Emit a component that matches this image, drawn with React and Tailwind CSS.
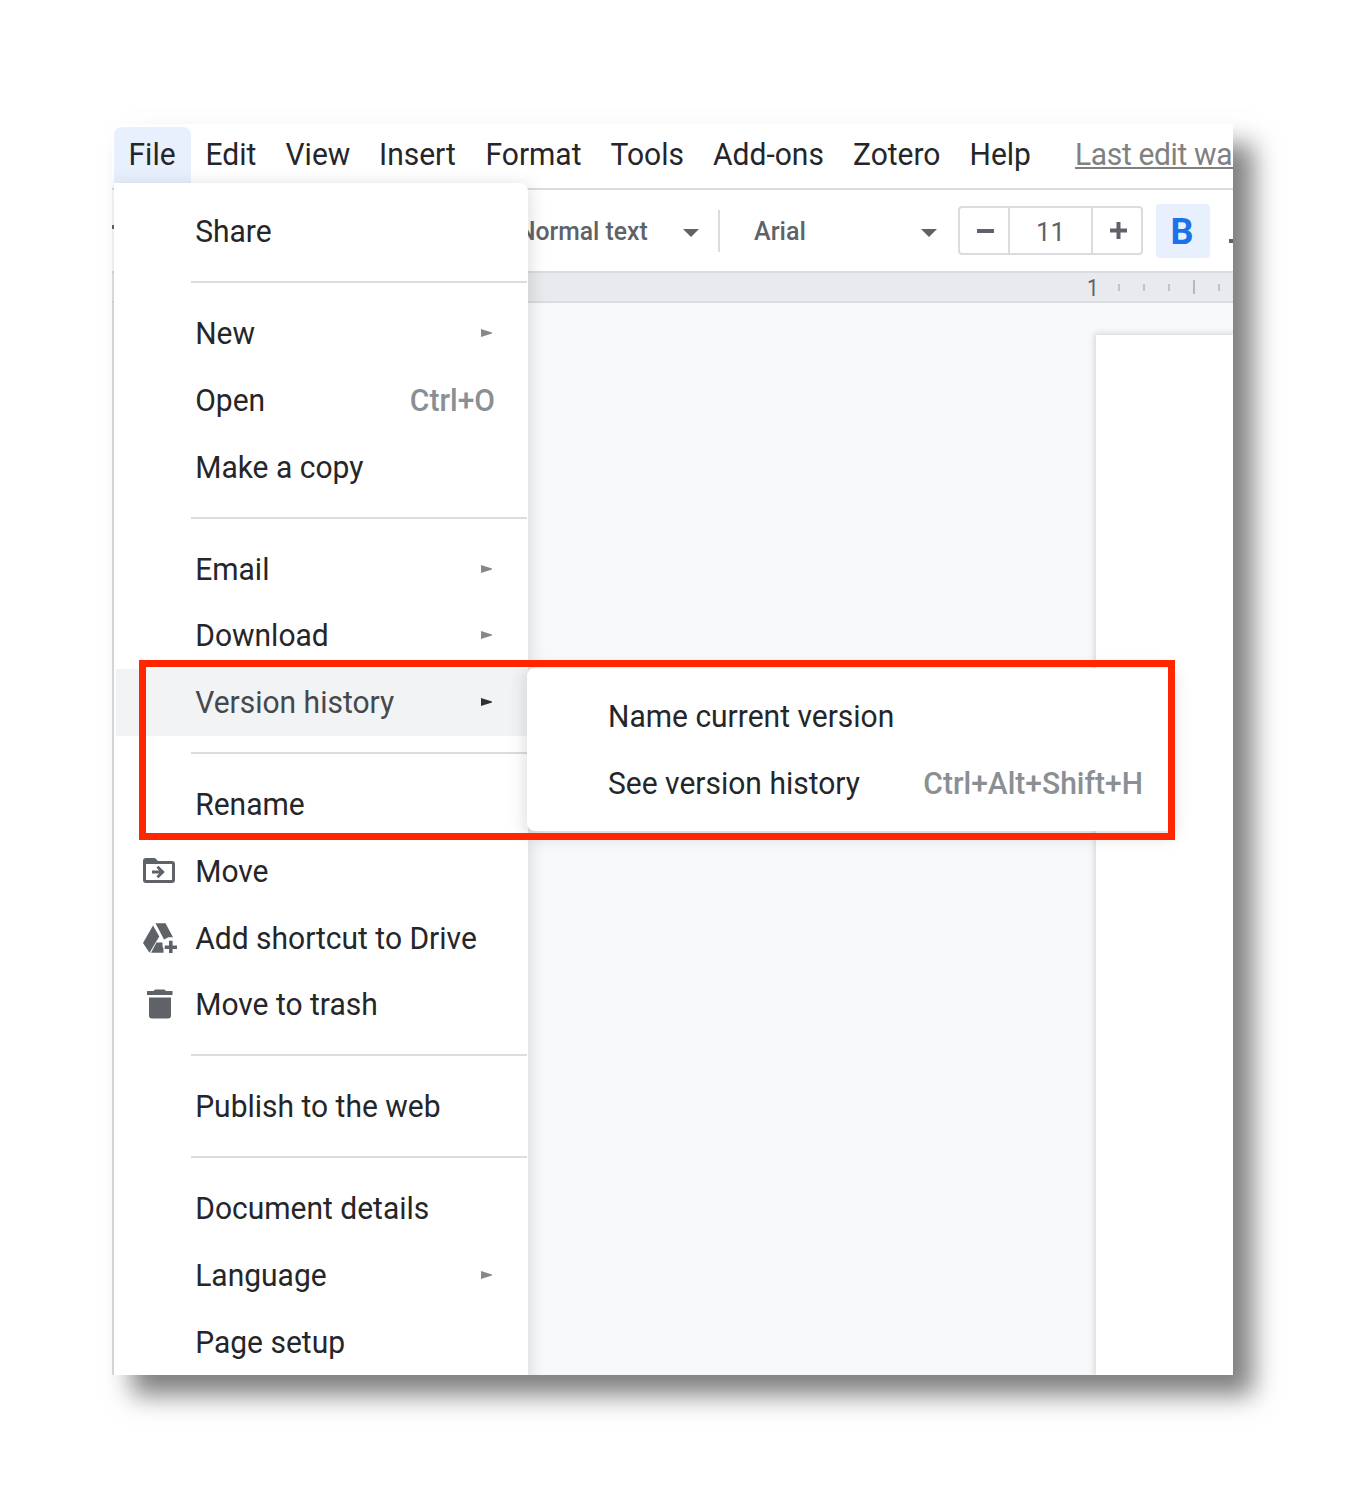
const menuBar = [
  { label: 'File', cls: 'w-[77px] pl-[14.5px] bg-[#e8f0fe] rounded-t-lg' },
  { label: 'Edit', cls: 'w-[80px] pl-[14.5px]' },
  { label: 'View', cls: 'w-[94px] pl-[14.5px]' },
  { label: 'Insert', cls: 'w-[106px] pl-[14px]' },
  { label: 'Format', cls: 'w-[125px] pl-[14.5px]' },
  { label: 'Tools', cls: 'w-[103px] pl-[14.5px]' },
  { label: 'Add-ons', cls: 'w-[139px] pl-[14px]' },
  { label: 'Zotero', cls: 'w-[117px] pl-[15px]' },
  { label: 'Help', cls: 'w-[120px] pl-[14.5px]' },
];

const fileMenu = [
  { label: 'Share' },
  null,
  { label: 'New', sub: true },
  { label: 'Open', keys: 'Ctrl+O' },
  { label: 'Make a copy' },
  null,
  { label: 'Email', sub: true },
  { label: 'Download', sub: true },
  { label: 'Version history', sub: true, active: true },
  null,
  { label: 'Rename' },
  { label: 'Move', icon: 'move' },
  { label: 'Add shortcut to Drive', icon: 'drive' },
  { label: 'Move to trash', icon: 'trash' },
  null,
  { label: 'Publish to the web' },
  null,
  { label: 'Document details' },
  { label: 'Language', sub: true },
  { label: 'Page setup' },
];

function Tall({ children, className = '' }) {
  return <span className={`inline-block origin-[0_84%] translate-y-[0.6px] scale-y-[1.07] ${className}`}>{children}</span>;
}

function Icon({ name }) {
  if (name === 'move')
    return (
      <svg className="h-[26px] w-8" viewBox="0 0 32 26" fill="none">
        <path fill="#5f6368" fillRule="evenodd" d="M3 0h9l3 3h14a3 3 0 0 1 3 3v16a3 3 0 0 1-3 3H3a3 3 0 0 1-3-3V3a3 3 0 0 1 3-3Zm0 6v16h26V6H3Z" />
        <path fill="#5f6368" d="M9 12.500h7.200l-2.800-2.700 2.100-2.100 6.300 6.300-6.300 6.300-2.100-2.100 2.800-2.700H9Z" />
      </svg>
    );
  if (name === 'drive')
    return (
      <svg className="h-[30px] w-[34px]" viewBox="0 0 34 30" fill="#5f6368">
        <path d="M10 2.500 16.300 13.500 6.500 29.700 0 20Z" />
        <path d="M12.500.3h10L30 14.200h-4.500l-4.500 2.300Z" />
        <path d="M13.500 19.500h6V23l1 2.800v3.900H8Z" />
        <path d="M26 17.800h3.600v4.700H34v3.600h-4.400v4H26v-4h-4.300v-3.600H26Z" />
      </svg>
    );
  return (
    <svg className="ml-1 h-[30px] w-[26px]" viewBox="0 0 26 30" fill="#5f6368">
      <path d="M0 2h6.500L8 .4h9.500L19 2h6.500v4H0ZM2 8.500h22V26.500a3 3 0 0 1-3 3H5a3 3 0 0 1-3-3Z" />
    </svg>
  );
}

function Row({ item }) {
  return (
    <div className={`ml-0.5 flex h-[66.8px] shrink-0 items-center ${item.active ? 'bg-[#f1f3f4]' : ''}`}>
      <div className="flex w-[79.2px] shrink-0 items-center pl-[27px]">{item.icon && <Icon name={item.icon} />}</div>
      <Tall className={item.active ? 'grow text-[#46484b]' : 'grow'}>{item.label}</Tall>
      {item.keys && <Tall className="pr-[33px] font-medium text-[#8a8f94]">{item.keys}</Tall>}
      {item.sub && (
        <svg className="mr-[36.500px] h-2 w-[11px]" viewBox="0 0 11 8" fill={item.active ? '#303134' : '#85888c'}>
          <path d="M0 0 11 3.500v1L0 8Z" />
        </svg>
      )}
    </div>
  );
}

function Caret() {
  return (
    <svg className="mt-1 h-2 w-4 shrink-0" viewBox="0 0 16 8" fill="#5f6368">
      <path d="M0 0h16L8 8Z" />
    </svg>
  );
}

export default function App() {
  return (
    <div className="h-[1500px] w-[1345px] overflow-hidden bg-white pt-[124px] pl-[112px] font-['Roboto',sans-serif] text-[30px] leading-none whitespace-nowrap text-[#25262a]">
      <div className="relative h-[1251px] w-[1121px] shadow-[20px_20px_24px_rgba(0,0,0,0.5)]">
        <div className="flex h-full flex-col overflow-hidden bg-white">
          <div className="flex h-[64px] shrink-0 pt-[3px] pl-0.5">
            {menuBar.map((m) => (
              <div key={m.label} className={`flex h-[58px] shrink-0 items-center pb-1 ${m.cls}`}>
                <Tall>{m.label}</Tall>
              </div>
            ))}
            <div className="mt-3 h-[30px] w-[158px] shrink-0 border-b-2 border-[#80807f] text-[#80807f]">
              <Tall className="tracking-[-0.35px]">Last edit wa</Tall>
            </div>
          </div>
          <div className="flex h-[83px] shrink-0 items-center border-t-2 border-[#dadce0] pl-[406px] text-[26px] font-medium text-[#5f6368]">
            <span className="w-[165px] shrink-0 origin-left scale-x-[0.95]">Normal text</span>
            <Caret />
            <div className="mr-[34px] ml-[19px] h-[42px] w-0.5 shrink-0 bg-[#dadce0]" />
            <span className="w-[167px] shrink-0 origin-left scale-x-[0.965]">Arial</span>
            <Caret />
            <div className="ml-[21px] flex h-[49px] w-[185px] shrink-0 rounded border-2 border-[#dadce0]">
              <div className="flex w-[48px] shrink-0 items-center justify-center pl-0.5"><div className="h-1 w-[17px] bg-[#5f6368]" /></div>
              <div className="flex w-[85px] shrink-0 items-center justify-center border-x-2 border-[#dadce0] pt-[3px] font-normal">11</div>
              <div className="flex w-[48px] shrink-0 items-center justify-center pl-0.5">
                <svg className="h-[17px] w-[17px]" viewBox="0 0 17 17" fill="#5f6368"><path d="M6.500 0h4v6.500H17v4h-6.500V17h-4v-6.500H0v-4h6.500Z" /></svg>
              </div>
            </div>
            <div className="ml-[13px] flex h-[54px] w-[54px] shrink-0 items-center justify-center rounded bg-[#e8f0fe] pt-0.5 pr-0.5 text-[36px] font-bold text-[#1a73e8]">B</div>
            <div className="mt-5 ml-[19px] h-1 w-5 shrink-0 bg-[#5f6368]" />
          </div>
          <div className="flex h-8 shrink-0 items-center border-y-2 border-[#dadce0] bg-[#e8eaed] pl-[975px] text-[23px] text-[#5f6368]">
            <span className="w-[31px] shrink-0 origin-left scale-x-90 pt-0.5">1</span>
            <div className="flex w-[150px] shrink-0 items-center gap-[23px]">
              <i className="h-[7px] w-0.5 shrink-0 bg-[#c0c3c7]" />
              <i className="h-[7px] w-0.5 shrink-0 bg-[#c0c3c7]" />
              <i className="h-[7px] w-0.5 shrink-0 bg-[#c0c3c7]" />
              <i className="h-[14px] w-0.5 shrink-0 bg-[#b4b7bc]" />
              <i className="h-[7px] w-0.5 shrink-0 bg-[#c0c3c7]" />
            </div>
          </div>
          <div className="grow border-l-2 border-[#e4e5e7] bg-[#f8f9fb] pt-8 pl-[982px]">
            <div className="h-full bg-white shadow-[0_0_6px_2px_rgba(60,64,67,0.16)]" />
          </div>
        </div>

        <div className="absolute inset-0 overflow-hidden">
          <div className="absolute top-[101px] left-0 h-1 w-0.5 bg-[#5f6368]" />
          <div className="absolute top-[59px] left-0.5 h-[1300px] w-[414px] rounded-tr-lg bg-white pt-[15px] shadow-[0_4px_16px_3px_rgba(60,64,67,0.16)]">
            {fileMenu.map((item, i) =>
              item ? (
                <Row key={i} item={item} />
              ) : (
                <div key={i} className="flex h-[35px] items-center pl-[77px]"><div className="h-0.5 w-[336px] bg-[#dadce0]" /></div>
              )
            )}
          </div>
          <div className="absolute top-[544px] left-[415px] h-[163px] w-[645px] rounded-lg bg-white pt-[15px] pr-[29px] pl-[81px] shadow-[0_4px_16px_3px_rgba(60,64,67,0.16)]">
            <div className="flex h-[66.500px] items-center"><Tall>Name current version</Tall></div>
            <div className="flex h-[66.500px] items-center justify-between">
              <Tall>See version history</Tall>
              <Tall className="font-medium text-[#8a8f94]">Ctrl+Alt+Shift+H</Tall>
            </div>
          </div>
          <div className="absolute top-[536px] left-[27px] h-[180px] w-[1036px] border-[7px] border-[#ff2600]" />
        </div>
      </div>
    </div>
  );
}
